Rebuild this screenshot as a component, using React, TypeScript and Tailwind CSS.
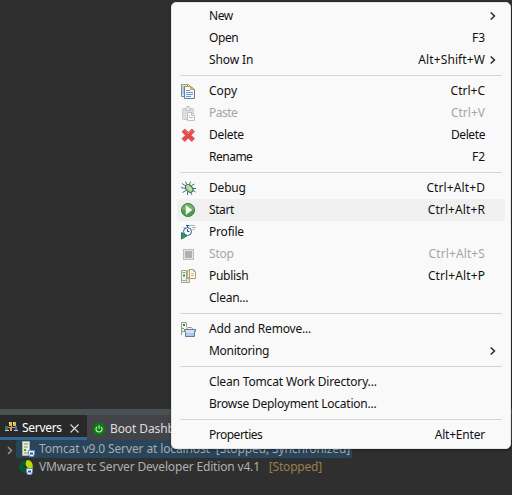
import React from "react";

type Item = {
  label: string;
  track: string;
  keys?: string;
  keyTrack?: string;
  icon?: React.ReactNode;
  sub?: boolean;
  disabled?: boolean;
  active?: boolean;
};

const CopyIcon = () => (
  <svg width="16" height="16" viewBox="0 0 16 16">
    <path d="M.5 1.5h6v12h-6z" fill="#d5e2ea" stroke="#7b8d96" />
    <path d="M1.5 4h3M1.5 6h3M1.5 8h3M1.5 10h3" stroke="#7fa3c4" />
    <path d="M3.5 3.5h6l4 3v9h-10z" fill="#f5f9fd" stroke="#5d7d9c" />
    <path d="M1 1.5h6.5l2 2M3.5 3.5h6" fill="none" stroke="#b59a58" />
    <path d="M9.5 3.5v3h4z" fill="#e7c667" stroke="#b8984f" strokeWidth=".8" />
    <path d="M5 7.5h4M5 9.5h7M5 11.5h7M5 13.5h5" stroke="#6e95c8" />
  </svg>
);
const PasteIcon = () => (
  <svg width="16" height="16" viewBox="0 0 16 16">
    <rect x="1.5" y="3.5" width="11" height="11" rx="1" fill="#dedede" stroke="#cacaca" />
    <path d="M4.5 5.5v-2h1.3V1.5h2.4v2h1.3v2z" fill="#efefef" stroke="#c2c2c2" />
    <path d="M6.5 7.5h4l3 3v5h-7z" fill="#fafafa" stroke="#c0c0c0" />
    <path d="M10.5 7.5v3h3M8 10.5h1M8 12.5h4" fill="none" stroke="#c0c0c0" />
  </svg>
);
const DeleteIcon = () => (
  <svg width="16" height="16" viewBox="1 0 16 16">
    <path d="M4.8 2 8.3 5.5 11.8 2l2.7 2.7-3.5 3.5 3.5 3.5-2.7 2.8L8.3 11l-3.5 3.5L2 11.7l3.5-3.5L2 4.7z" fill="#e84848" stroke="#cf6262" strokeLinejoin="round" />
    <path d="m4.8 3.3 3.5 3.5 3.5-3.5 1.3 1.3" fill="none" stroke="#ef8078" />
  </svg>
);
const DebugIcon = () => (
  <svg width="16" height="16" viewBox="1 0 16 16">
    <path d="M5.5 1.5 7 5M10.5 1.5 9.5 5M2 3.5l4 2.5M1 7.5l4 1M2.5 12.5 6 10.5M7.5 11.5V15M10.5 12l1.5 3M13 10.5l2.5 1.5M12.5 8.5H16M11.5 5.5l3-1.5" fill="none" stroke="#35636a" strokeWidth=".9" />
    <ellipse cx="9.2" cy="8.5" rx="3" ry="4.3" transform="rotate(-45 9.2 8.5)" fill="#a9cf8e" stroke="#26706a" />
    <path d="M6.5 6 8.5 5.3M8.5 7.3l2.7 2.7" stroke="#e2efbf" strokeWidth="1.3" />
  </svg>
);
const StartIcon = () => (
  <svg width="16" height="16" viewBox="0 0 16 16">
    <circle cx="7" cy="8" r="6.6" fill="#4c9d4d" stroke="#4e8458" />
    <path d="M1 8a6 6 0 0 1 12 0z" fill="#6fb363" />
    <path d="M5 3.5v9L11 8z" fill="#fff" stroke="#d7edc9" strokeWidth=".6" />
  </svg>
);
const ProfileIcon = () => (
  <svg width="16" height="16" viewBox="0 0 16 16">
    <circle cx="6.5" cy="7.5" r="4" fill="#f7fcff" stroke="#2d628d" />
    <path d="M5 1.5h3M6.5 1.5v2.2M3 3.5l1 1M6.5 5v2.5h2" fill="none" stroke="#24547d" />
    <path d="M8 1.5h6M11 3.5h4M11.5 5.5h2" stroke="#9cb3c8" />
    <path d="M.5 8.5v6.5L6 11.8z" fill="#379a61" stroke="#23774d" />
  </svg>
);
const StopIcon = () => (
  <svg width="16" height="16" viewBox="0 0 16 16">
    <rect x="2.5" y="3.5" width="10" height="10" fill="#e3e3e3" stroke="#bcbcbc" />
    <rect x="4" y="5" width="7" height="7" fill="#b0b0b0" />
  </svg>
);
const PublishIcon = () => (
  <svg width="16" height="16" viewBox="0 0 16 16">
    <path d="M.5 2.5h5v12h-5z" fill="#edf3e6" stroke="#9aa792" />
    <path d="M1.5 4.5h3M1.5 12.5h3" stroke="#8fa38f" />
    <path d="M2 6.5h2v2H2z" fill="#269c4e" />
    <path d="M5.5 10.5h3v4h-3z" fill="#e2e9df" stroke="#a1aa99" />
    <path d="M6.5 2.5h4v7h-4z" fill="#fff6cf" stroke="#b5a680" />
    <path d="M8.5 1.5h4l2 2v7h-6z" fill="#fffbea" stroke="#b49d6b" />
    <path d="M12.5 1.5v2h2M10 5.5h3M10 7.5h3" fill="none" stroke="#b6b6ae" />
  </svg>
);
const AddIcon = () => (
  <svg width="16" height="16" viewBox="0 0 16 16">
    <path d="M.5 14V1.5h5V6" fill="#eef2e7" stroke="#9b9f88" />
    <path d="M2 3h2v2H2z" fill="#249947" />
    <path d="M1 7.5h2M1 10.5h2" stroke="#91a080" />
    <path d="m5.5 8.5 1-2h4l1.5 2" fill="none" stroke="#b18a7c" />
    <path d="M3.5 8.5h11v2h-1v5h-9v-5h-1z" fill="#aecae9" stroke="#627ba5" />
    <path d="M5 9h8v3H5z" fill="#d0e2f5" />
  </svg>
);

const groups: Item[][] = [
  [
    { label: "New", track: "tracking-[-0.4px]", sub: true },
    { label: "Open", track: "tracking-[-0.4px]", keys: "F3" },
    { label: "Show In", track: "tracking-[-0.1px]", keys: "Alt+Shift+W", keyTrack: "tracking-[0.1px]", sub: true },
  ],
  [
    { label: "Copy", track: "tracking-normal", keys: "Ctrl+C", icon: <CopyIcon /> },
    { label: "Paste", track: "tracking-[-0.5px]", keys: "Ctrl+V", icon: <PasteIcon />, disabled: true },
    { label: "Delete", track: "tracking-[-0.3px]", keys: "Delete", keyTrack: "tracking-[-0.4px]", icon: <DeleteIcon /> },
    { label: "Rename", track: "tracking-[-0.5px]", keys: "F2" },
  ],
  [
    { label: "Debug", track: "tracking-[-0.2px]", keys: "Ctrl+Alt+D", keyTrack: "tracking-[0.1px]", icon: <DebugIcon /> },
    { label: "Start", track: "tracking-[-0.4px]", keys: "Ctrl+Alt+R", keyTrack: "tracking-[0.1px]", icon: <StartIcon />, active: true },
    { label: "Profile", track: "tracking-[-0.2px]", icon: <ProfileIcon /> },
    { label: "Stop", track: "tracking-[-0.2px]", keys: "Ctrl+Alt+S", keyTrack: "tracking-[0.1px]", icon: <StopIcon />, disabled: true },
    { label: "Publish", track: "tracking-[-0.3px]", keys: "Ctrl+Alt+P", keyTrack: "tracking-[0.1px]", icon: <PublishIcon /> },
    { label: "Clean...", track: "tracking-[-0.25px]" },
  ],
  [
    { label: "Add and Remove...", track: "tracking-[-0.18px]", icon: <AddIcon /> },
    { label: "Monitoring", track: "tracking-[-0.3px]", sub: true },
  ],
  [
    { label: "Clean Tomcat Work Directory...", track: "tracking-[-0.16px]" },
    { label: "Browse Deployment Location...", track: "tracking-[-0.24px]" },
  ],
  [{ label: "Properties", track: "tracking-[-0.5px]", keys: "Alt+Enter", keyTrack: "tracking-[-0.2px]" }],
];

function Row({ item }: { item: Item }) {
  return (
    <div className={`mx-[5px] flex h-[22px] items-center rounded pl-1 ${item.active ? "bg-[#f0f0f0]" : ""} ${item.disabled ? "text-[#a5a5a5]" : "text-[#111]"}`}>
      <span className="w-7 shrink-0">{item.icon}</span>
      <span className={item.track}>{item.label}</span>
      <span className={`ml-auto ${item.keyTrack ?? ""}`}>{item.keys}</span>
      <span className="ml-[5px] flex w-[15px] shrink-0">
        {item.sub && (
          <svg width="6" height="10" viewBox="0 0 6 10" fill="none" stroke="#222" strokeWidth="1.4">
            <path d="m.7 1.5 3.8 3.5-3.8 3.5" />
          </svg>
        )}
      </span>
    </div>
  );
}

const StateBadge = () => (
  <g>
    <path d="M7.5 9.5h6v3l-1 3h-4l-1-3z" fill="#e6f0ff" stroke="#6b8cc2" />
    <path d="M9 11.5h3v2H9z" fill="#2859a5" />
  </g>
);

export default function App() {
  return (
    <div className="relative flex h-[495px] w-[512px] flex-col overflow-hidden bg-[#2f2f2f] font-['Noto_Sans','Noto_Sans_CJK_KR',sans-serif] text-[12px] leading-[18px] whitespace-pre">
      <div className="h-[409px] shrink-0" />
      <div className="h-[6px] shrink-0 bg-[#4c5254]" />
      <div className="flex h-[25px] shrink-0 bg-[#434447] text-[#dedede]">
        <div className="flex w-[87px] shrink-0 items-center border-b-[3px] border-[#306797] bg-[#292929] pt-[4px] pl-[5px] text-white">
          <svg className="shrink-0" width="14" height="14" viewBox="0 0 14 14">
            <path d="M1 6.5h11M6.5 2v7" stroke="#a9a087" />
            <path d="M4 1h3v4H4zM8 1h3v4H8z" fill="#e2b94b" />
            <path d="M4 1h1v2H4zM8 1h1v2H8z" fill="#fff0b0" />
            <path d="M0 5h3v4H0z" fill="#35775e" />
            <path d="M5 6h2v4H5z" fill="#d3a34a" />
            <path d="M0 9h4v1H0zM9 9h4v1H9z" fill="#b9c7df" />
            <path d="M10 5h2v4h-2z" fill="#466eb0" />
          </svg>
          <span className="ml-[3px] w-[40px] shrink-0 tracking-[-0.3px]">Servers</span>
          <svg className="ml-[8px] shrink-0" width="9" height="9" viewBox="0 0 9 9" stroke="#ddd" strokeWidth="1.1"><path d="m.5.5 8 8m0-8-8 8" /></svg>
        </div>
        <div className="flex items-center pt-[2px] pl-[6px]">
          <svg className="shrink-0" width="12" height="12" viewBox="0 0 12 12">
            <circle cx="6" cy="6" r="6" fill="#078407" />
            <path d="M4 3.8a3 3 0 1 0 4 0M6 2.3v3.5" fill="none" stroke="#d8f1cf" strokeWidth="1.1" />
          </svg>
          <span className="ml-[5px] tracking-[-0.1px]">Boot Dashboard</span>
        </div>
      </div>
      <div className="flex h-[18px] shrink-0 items-center text-[#a9acad]">
        <span className="flex w-4 shrink-0 pt-[2px] pl-[7px]">
          <svg className="shrink-0" width="6" height="9" viewBox="0 0 6 9" fill="none" stroke="#929292" strokeWidth="1.5"><path d="m1 1 3.5 3.5L1 8" /></svg>
        </span>
        <div className="flex h-[18px] w-[336px] shrink-0 items-center rounded-[2px] bg-[#28455b] pl-[5px]">
          <svg className="shrink-0" width="16" height="16" viewBox="0 0 16 16">
            <path d="M1.5.5h7v14h-7z" fill="#e7ecdf" stroke="#a9b59d" />
            <path d="M3 3h4M3 6h4M3 12h4" stroke="#78936b" />
            <path d="M3 8h2v2H3z" fill="#24a24e" />
            <StateBadge />
          </svg>
          <span className="ml-[2px] tracking-[-0.12px]">Tomcat v9.0 Server at localhost  [Stopped, Synchronized]</span>
        </div>
      </div>
      <div className="flex h-[18px] shrink-0 items-center pl-[19px] text-[#b0b0b0]">
        <svg className="shrink-0" width="18" height="16" viewBox="0 0 18 16">
          <path d="M6 1C1 2 0 6 0 9c1 3 3 5 7 5L6 5z" fill="#07582f" />
          <path d="M8 1c5 0 7 5 5 10L9 9C6 6 6 4 8 1z" fill="#b9db08" />
          <StateBadge />
        </svg>
        <span className="ml-[2px] tracking-[-0.17px]">VMware tc Server Developer Edition v4.1</span>
        <span className="ml-[9px] tracking-[-0.2px] text-[#98804e]">[Stopped]</span>
      </div>

      <div className="absolute top-[2px] left-[171px] h-[447px] w-[340px] rounded-[5px] border border-[#e5e5e5] bg-[#f9f9f9] py-[2px] shadow-[0_1px_3px_#0006]">
        {groups.map((group, i) => (
          <React.Fragment key={i}>
            {i > 0 && <div className="mx-2 my-[4px] h-px bg-[#d5d5d5]" />}
            {group.map((item) => <Row key={item.label} item={item} />)}
          </React.Fragment>
        ))}
      </div>
    </div>
  );
}
